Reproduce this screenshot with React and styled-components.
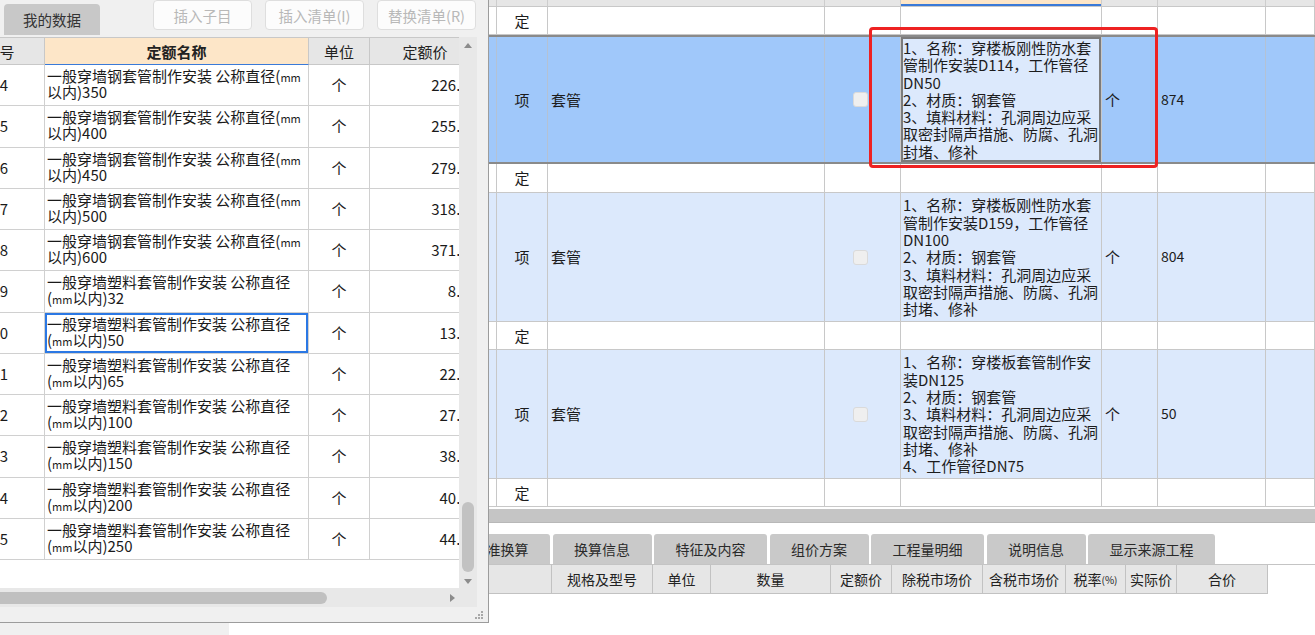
import React from 'react';
import styled, { createGlobalStyle, css } from 'styled-components';

const FONT = '"Noto Sans CJK SC", "Noto Sans", sans-serif';

const GlobalStyle = createGlobalStyle`
  html, body { margin: 0; padding: 0; background: #fff; overflow: hidden; }
  body { font-family: ${FONT}; color: #1a1a1a; }
  * { box-sizing: border-box; }
`;

const Screen = styled.div`
  position: relative;
  width: 1315px;
  height: 635px;
  overflow: hidden;
  background: #fff;
  display: flex;
  flex-direction: column;
`;

/* ---------- main bill table ---------- */
const MAIN_COLS = '497px 51px 277px 76px 201px 56px 108px 1fr';

const MainHead = styled.div`
  display: grid;
  grid-template-columns: ${MAIN_COLS};
  height: 7px;
  background: #e6e6e6;
  border-bottom: 1px solid #c8c8c8;
`;

const MainHeadCell = styled.div`
  border-right: 1px solid #cdcdcd;
  ${p => p.$active && css`
    background: #fde6c8;
    box-shadow: inset 0 -2px 0 #3a7ad8;
  `}
`;

const toneBg = { plain: '#ffffff', item: '#dce9fc', selected: '#a0c8fa' };

const MainRow = styled.div`
  display: grid;
  grid-template-columns: ${MAIN_COLS};
  height: ${p => p.$h}px;
  background: ${p => toneBg[p.$tone]};
  border-bottom: 1px solid #c8c8c8;
  ${p => p.$tone === 'selected' && css`
    border-top: 2px solid #8a8a8a;
    border-bottom: 2px solid #8a8a8a;
  `}
`;

const MainCell = styled.div`
  border-right: 1px solid ${p => (p.$tone === 'selected' ? '#b4c2d4' : '#c8c8c8')};
  display: flex;
  align-items: center;
  justify-content: ${p => (p.$center ? 'center' : 'flex-start')};
  padding: 0 3px;
  font-size: 15px;
  line-height: 17.3px;
  white-space: nowrap;
  overflow: hidden;
  color: #1c1c1c;
`;

const NumText = styled.span`
  font-size: 14px;
`;

const FeatureCell = styled.div`
  border-right: 1px solid #c8c8c8;
  display: flex;
  align-items: center;
  padding: 0 2px;
  font-size: 15px;
  line-height: 17.3px;
  white-space: pre;
  overflow: hidden;
  color: #1c1c1c;
  ${p => p.$editing && css`
    background: #dce9fc;
    box-shadow: inset 0 0 0 2px #7b7b7b;
  `}
`;

const CheckCell = styled.div`
  border-right: 1px solid #c8c8c8;
  display: flex;
  align-items: center;
  justify-content: center;
  padding-right: 4px;
`;

const CheckBox = styled.span`
  width: 15px;
  height: 15px;
  border-radius: 3px;
  background: #efefef;
  border: 1px solid #dadada;
`;

const Marker = styled.div`
  position: absolute;
  left: 869px;
  top: 27px;
  width: 289px;
  height: 141px;
  border: 3.5px solid #ee2222;
  border-radius: 4px;
  pointer-events: none;
  z-index: 3;
`;

/* ---------- splitter + detail pane ---------- */
const Splitter = styled.div`
  margin-top: 2px;
  height: 14px;
  background: #c5c5c5;
  border-bottom: 1px solid #b8b8b8;
`;

const Lower = styled.div`
  flex: 1;
  display: flex;
`;

const SideStub = styled.div`
  width: 229px;
  background: #f0f0f0;
`;

const DetailPane = styled.div`
  flex: 1;
  display: flex;
  flex-direction: column;
  padding-top: 11px;
  background: #fff;
`;

const TabBar = styled.div`
  display: flex;
  gap: 2.5px;
  padding-left: 5px;
  height: 31px;
  border-bottom: 1px solid #c4c4c4;
`;

const Tab = styled.div`
  padding: 0 21.5px;
  background: #c9c9c9;
  border-radius: 3px 3px 0 0;
  display: flex;
  align-items: center;
  font-size: 14px;
  color: #2a2a2a;
  white-space: nowrap;
`;

const DETAIL_COLS = '101px 50px 172px 101px 58px 120px 61px 91px 83px 60px 51px 91px';

const DetailHead = styled.div`
  display: grid;
  grid-template-columns: ${DETAIL_COLS};
  width: max-content;
  height: 29px;
  background: #e6e6e6;
  border-bottom: 1px solid #c2c2c2;
`;

const DetailHeadCell = styled.div`
  border-right: 1px solid #c2c2c2;
  display: flex;
  align-items: center;
  justify-content: center;
  font-size: 14px;
  color: #222;
  white-space: nowrap;
`;

const Small = styled.span`
  font-size: 10px;
`;

/* ---------- floating quota panel ---------- */
const Panel = styled.div`
  position: absolute;
  left: -45px;
  top: 0;
  width: 534px;
  height: 623px;
  background: #f0f0f0;
  border-right: 1px solid #9c9c9c;
  border-bottom: 1px solid #9c9c9c;
  display: flex;
  flex-direction: column;
  z-index: 2;
`;

const PanelTop = styled.div`
  height: 37px;
  display: flex;
  align-items: flex-start;
  padding-left: 49px;
`;

const PanelTab = styled.div`
  margin-top: 4px;
  width: 96px;
  height: 31px;
  background: #c8c8c8;
  border-radius: 4px 4px 0 0;
  display: flex;
  align-items: center;
  justify-content: center;
  font-size: 14.5px;
  color: #333;
`;

const ToolButtons = styled.div`
  display: flex;
  gap: 13px;
  margin-left: 53px;
`;

const ToolButton = styled.button`
  width: 99px;
  height: 30px;
  border: 1px solid #dedede;
  background: #fcfcfc;
  border-radius: 4px;
  color: #b8b8b8;
  font: 14.5px ${FONT};
  padding: 0;
`;

const PanelBody = styled.div`
  display: grid;
  grid-template-columns: 504px 18px;
  grid-template-rows: 551px 19px;
`;

const TableView = styled.div`
  overflow: hidden;
  background: #fff;
`;

const Q_COLS = '90px 264px 61px 111px 120px';

const QHead = styled.div`
  display: grid;
  grid-template-columns: ${Q_COLS};
  height: 28px;
  border-top: 1px solid #c8c8c8;
`;

const QHeadCell = styled.div`
  background: ${p => (p.$active ? '#fde6c8' : '#e6e6e6')};
  border-right: 1px solid #c8c8c8;
  border-bottom: 1px solid ${p => (p.$active ? '#3a7ad8' : '#c8c8c8')};
  display: flex;
  align-items: center;
  justify-content: center;
  font-size: 15px;
  font-weight: ${p => (p.$active ? 700 : 400)};
  color: #222;
  white-space: nowrap;
`;

const QRow = styled.div`
  display: grid;
  grid-template-columns: ${Q_COLS};
  height: 41.25px;
`;

const QCell = styled.div`
  border-right: 1px solid #d0d0d0;
  border-bottom: 1px solid #d0d0d0;
  display: flex;
  align-items: center;
  font-size: 15px;
  line-height: 16px;
  white-space: nowrap;
  overflow: hidden;
  color: #1a1a1a;
  justify-content: ${p => p.$justify || 'flex-start'};
  padding: ${p => p.$pad || '0'};
`;

const QName = styled.div`
  border-right: 1px solid #d0d0d0;
  border-bottom: 1px solid #d0d0d0;
  padding: 3px 2px 0;
  font-size: 15px;
  line-height: 16px;
  white-space: nowrap;
  overflow: hidden;
  color: #1a1a1a;
  ${p => p.$focus && css`
    box-shadow: inset 0 0 0 2px #2b78e4;
  `}
`;

const NameLine = styled.div`
  height: 16px;
  line-height: 16px;
`;

const Mm = styled.span`
  font-size: 11px;
  line-height: 1;
`;

const CodeText = styled.span`
  width: 53px;
  text-align: right;
`;

const VScroll = styled.div`
  background: #e8e8e8;
  display: flex;
  flex-direction: column;
`;

const ArrowBox = styled.div`
  height: ${p => p.$size || 17}px;
  width: ${p => (p.$horizontal ? '14px' : 'auto')};
  display: flex;
  align-items: center;
  justify-content: center;
`;

const Triangle = styled.span`
  width: 0;
  height: 0;
  ${p => p.$dir === 'up' && css`
    border-left: 4.5px solid transparent;
    border-right: 4.5px solid transparent;
    border-bottom: 5px solid #8c8c8c;
  `}
  ${p => p.$dir === 'down' && css`
    border-left: 4.5px solid transparent;
    border-right: 4.5px solid transparent;
    border-top: 5px solid #8c8c8c;
  `}
  ${p => p.$dir === 'right' && css`
    border-top: 4.5px solid transparent;
    border-bottom: 4.5px solid transparent;
    border-left: 5px solid #8c8c8c;
  `}
`;

const VTrack = styled.div`
  flex: 1;
  display: flex;
  flex-direction: column;
  justify-content: flex-end;
  padding: 0 3px 2px;
`;

const VThumb = styled.div`
  height: 70px;
  border-radius: 6px;
  background: #c2c2c2;
`;

const HScroll = styled.div`
  background: #e8e8e8;
  display: flex;
  align-items: center;
  padding-left: 20px;
`;

const HThumb = styled.div`
  width: 352px;
  height: 12px;
  border-radius: 6px;
  background: #c0c0c0;
`;

const Spacer = styled.div`
  flex: 1;
`;

const Corner = styled.div`
  background: #e8e8e8;
`;

const PanelFoot = styled.div`
  height: 15px;
  display: flex;
  justify-content: flex-end;
  align-items: center;
  padding-right: 4px;
`;

const Grip = () => (
  <svg width="10" height="10" viewBox="0 0 10 10">
    {[[8, 2], [5, 5], [8, 5], [2, 8], [5, 8], [8, 8]].map(([x, y]) => (
      <rect key={`${x}-${y}`} x={x - 1} y={y - 1} width="2" height="2" fill="#a8a8a8" />
    ))}
  </svg>
);

/* ---------- data ---------- */
const steel = size => [
  <>一般穿墙钢套管制作安装 公称直径(<Mm>mm</Mm></>,
  <>以内){size}</>,
];
const plastic = size => [
  <>一般穿墙塑料套管制作安装 公称直径</>,
  <>(<Mm>mm</Mm>以内){size}</>,
];

const quotaRows = [
  { code: '10-384', name: steel('350'), price: '226.51' },
  { code: '10-385', name: steel('400'), price: '255.68' },
  { code: '10-386', name: steel('450'), price: '279.02' },
  { code: '10-387', name: steel('500'), price: '318.44' },
  { code: '10-388', name: steel('600'), price: '371.27' },
  { code: '10-389', name: plastic('32'), price: '8.83' },
  { code: '10-390', name: plastic('50'), price: '13.12', focus: true },
  { code: '10-391', name: plastic('65'), price: '22.05' },
  { code: '10-392', name: plastic('100'), price: '27.08' },
  { code: '10-393', name: plastic('150'), price: '38.46' },
  { code: '10-394', name: plastic('200'), price: '40.57' },
  { code: '10-395', name: plastic('250'), price: '44.93' },
];

const billRows = [
  { kind: '定', h: 28 },
  {
    kind: '项', h: 129, tone: 'selected', name: '套管', unit: '个', qty: '874', editing: true,
    feature: ['1、名称：穿楼板刚性防水套', '管制作安装D114，工作管径', 'DN50', '2、材质：钢套管', '3、填料材料：孔洞周边应采', '取密封隔声措施、防腐、孔洞', '封堵、修补'],
  },
  { kind: '定', h: 29 },
  {
    kind: '项', h: 129, tone: 'item', name: '套管', unit: '个', qty: '804',
    feature: ['1、名称：穿楼板刚性防水套', '管制作安装D159，工作管径', 'DN100', '2、材质：钢套管', '3、填料材料：孔洞周边应采', '取密封隔声措施、防腐、孔洞', '封堵、修补'],
  },
  { kind: '定', h: 28 },
  {
    kind: '项', h: 129, tone: 'item', name: '套管', unit: '个', qty: '50',
    feature: ['1、名称：穿楼板套管制作安', '装DN125', '2、材质：钢套管', '3、填料材料：孔洞周边应采', '取密封隔声措施、防腐、孔洞', '封堵、修补', '4、工作管径DN75'],
  },
  { kind: '定', h: 28 },
];

const tabs = ['工料机显示', '单价构成', '标准换算', '换算信息', '特征及内容', '组价方案', '工程量明细', '说明信息', '显示来源工程'];

const detailCols = [
  '编码', '类别', '名称', '规格及型号', '单位', '数量', '定额价', '除税市场价', '含税市场价',
  <>税率<Small>(%)</Small></>, '实际价', '合价',
];

export default function App() {
  return (
    <>
      <GlobalStyle />
      <Screen>
        <MainHead>
          {Array.from({ length: 8 }).map((_, i) => (
            <MainHeadCell key={i} $active={i === 4} />
          ))}
        </MainHead>
        {billRows.map((r, i) => {
          const tone = r.tone || 'plain';
          return (
            <MainRow key={i} $h={r.h} $tone={tone}>
              <MainCell $tone={tone} />
              <MainCell $tone={tone} $center>{r.kind}</MainCell>
              <MainCell $tone={tone}>{r.name}</MainCell>
              {r.feature ? (
                <CheckCell><CheckBox /></CheckCell>
              ) : (
                <MainCell $tone={tone} />
              )}
              <FeatureCell $editing={r.editing}>{r.feature ? r.feature.join('\n') : ''}</FeatureCell>
              <MainCell $tone={tone}>{r.unit}</MainCell>
              <MainCell $tone={tone}>{r.qty && <NumText>{r.qty}</NumText>}</MainCell>
              <MainCell $tone={tone} />
            </MainRow>
          );
        })}
        <Splitter />
        <Lower>
          <SideStub />
          <DetailPane>
            <TabBar>
              {tabs.map(t => <Tab key={t}>{t}</Tab>)}
            </TabBar>
            <DetailHead>
              {detailCols.map((c, i) => <DetailHeadCell key={i}>{c}</DetailHeadCell>)}
            </DetailHead>
          </DetailPane>
        </Lower>

        <Marker />

        <Panel>
          <PanelTop>
            <PanelTab>我的数据</PanelTab>
            <ToolButtons>
              <ToolButton disabled>插入子目</ToolButton>
              <ToolButton disabled>插入清单(I)</ToolButton>
              <ToolButton disabled>替换清单(R)</ToolButton>
            </ToolButtons>
          </PanelTop>
          <PanelBody>
            <TableView>
              <QHead>
                <QHeadCell>编号</QHeadCell>
                <QHeadCell $active>定额名称</QHeadCell>
                <QHeadCell>单位</QHeadCell>
                <QHeadCell>定额价</QHeadCell>
                <QHeadCell>人工费</QHeadCell>
              </QHead>
              {quotaRows.map(r => (
                <QRow key={r.code}>
                  <QCell><CodeText>{r.code}</CodeText></QCell>
                  <QName $focus={r.focus}>
                    {r.name.map((line, i) => <NameLine key={i}>{line}</NameLine>)}
                  </QName>
                  <QCell $justify="center">个</QCell>
                  <QCell $justify="flex-end" $pad="0 3px 0 0">{r.price}</QCell>
                  <QCell />
                </QRow>
              ))}
            </TableView>
            <VScroll>
              <ArrowBox><Triangle $dir="up" /></ArrowBox>
              <VTrack><VThumb /></VTrack>
              <ArrowBox $size={14}><Triangle $dir="down" /></ArrowBox>
            </VScroll>
            <HScroll>
              <HThumb />
              <Spacer />
              <ArrowBox $horizontal $size={19}><Triangle $dir="right" /></ArrowBox>
            </HScroll>
            <Corner />
          </PanelBody>
          <PanelFoot><Grip /></PanelFoot>
        </Panel>
      </Screen>
    </>
  );
}
